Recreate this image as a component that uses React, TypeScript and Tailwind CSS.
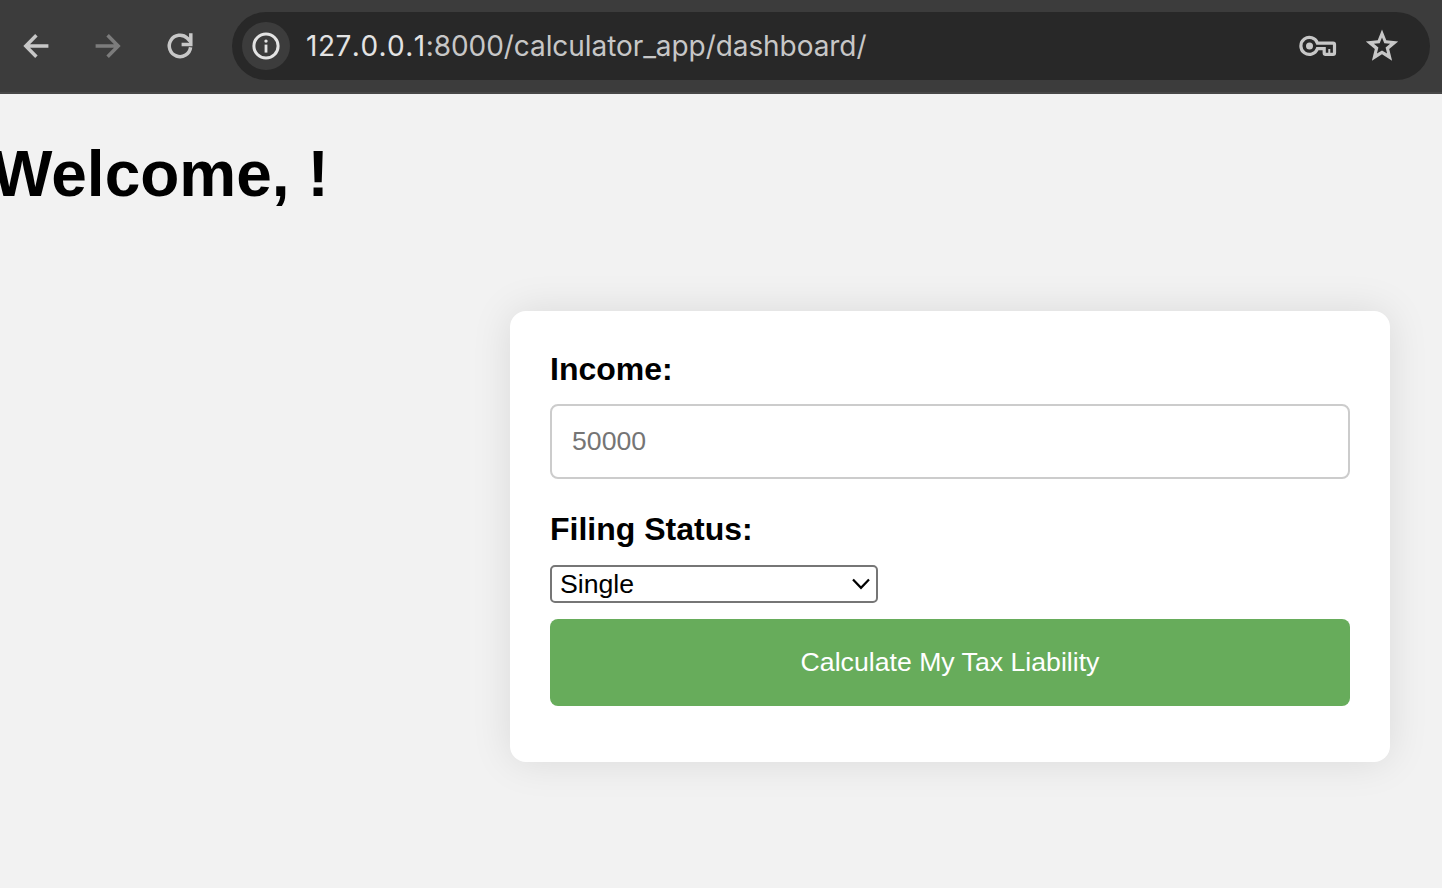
function BackIcon() {
  return (
    <svg width="26" height="26" viewBox="0 0 26 26" fill="none" stroke="currentColor" strokeWidth="3.5">
      <path d="M25.4 13H4M13.4 2.2L2.8 13l10.6 10.8" />
    </svg>
  );
}

function ForwardIcon() {
  return (
    <svg width="26" height="26" viewBox="0 0 26 26" fill="none" stroke="currentColor" strokeWidth="3.5">
      <path d="M.6 13H22M12.6 2.2L23.2 13 12.6 23.8" />
    </svg>
  );
}

function ReloadIcon() {
  return (
    <svg width="28" height="28" viewBox="0 0 28 28" fill="none" stroke="currentColor" strokeWidth="3.5">
      <path d="M24.6 15.2A10.7 10.7 0 1 1 21.4 6.2L24 9" />
      <path d="M15.6 12.6H24.8V1.2" />
    </svg>
  );
}

function InfoIcon() {
  return (
    <svg width="28" height="28" viewBox="0 0 28 28" fill="none">
      <circle cx="14" cy="14" r="12.1" stroke="#e3e3e3" strokeWidth="3" />
      <path d="M12.6 12.6h2.8v8h-2.8z" fill="#e3e3e3" />
      <circle cx="14" cy="9.1" r="1.7" fill="#e3e3e3" />
    </svg>
  );
}

function KeyIcon() {
  return (
    <svg width="38" height="22" viewBox="0 0 38 22" fill="none" stroke="#c7c7c7" strokeWidth="3.2">
      <path d="M18.4 8.1H34.1Q35.5 8.1 35.5 9.5V18Q35.5 19.4 34.1 19.4H26.6Q25.2 19.4 25.2 18V13.7H18.4A8.5 8.5 0 1 1 18.4 8.1Z" />
      <path d="M30.3 14V19" strokeWidth="2" />
      <circle cx="10.5" cy="11" r="3.5" fill="#c7c7c7" stroke="none" />
    </svg>
  );
}

function StarIcon() {
  return (
    <svg width="34" height="34" viewBox="0 0 34 34">
      <path
        fill="#c7c7c7"
        fillRule="evenodd"
        d="M17 .6L21.3 11.3L33.2 12.4L24.2 20L27.1 31.7L17 25.3L6.9 31.7L9.8 20L.8 12.4L12.7 11.3ZM17 8.6L14.7 14.2L8.9 14.7L13.4 18.6L11.9 24.5L17 21.4L22.1 24.5L20.6 18.6L25.1 14.7L19.3 14.2Z"
      />
    </svg>
  );
}

function BrowserBar() {
  return (
    <header className="flex h-[94px] items-start border-b-2 border-[#474747] bg-[#3c3c3c] pt-3 pr-3">
      <nav className="flex h-[68px] w-[232px] shrink-0 items-center pl-[23px]">
        <button className="text-[#c7c7c7]" aria-label="Back"><BackIcon /></button>
        <button className="ml-[46px] text-[#7c7c7c]" aria-label="Forward"><ForwardIcon /></button>
        <button className="ml-[45px] text-[#c7c7c7]" aria-label="Reload"><ReloadIcon /></button>
      </nav>
      <div className="flex h-[68px] flex-1 items-center rounded-full bg-[#282828] pl-2.5">
        <span className="flex size-12 items-center justify-center rounded-full bg-[#3c3c3c]"><InfoIcon /></span>
        <span className="ml-4 flex-1 whitespace-nowrap font-['Inter',sans-serif] text-[28px] leading-8 tracking-[-0.07px] text-[#c7c7c7]">
          <span className="tracking-[0.5px] text-[#e3e3e3] [font-kerning:none]">127.0.0.1</span>:8000/calculator_app/dashboard/
        </span>
        <KeyIcon />
        <span className="mr-[31px] ml-7"><StarIcon /></span>
      </div>
    </header>
  );
}

export default function App() {
  return (
    <div className="h-[888px] w-[1442px] overflow-hidden bg-[#f2f2f2] font-['Liberation_Sans',Arial,sans-serif] text-black">
      <BrowserBar />
      <h1 className="mt-[43px] -ml-2 text-[64px] leading-[74px] font-bold whitespace-nowrap">Welcome, !</h1>
      <form className="mt-[100px] ml-[510px] h-[451px] w-[880px] rounded-2xl bg-white px-10 pt-10 shadow-[0_0_40px_rgba(0,0,0,0.1)]">
        <label className="block text-[32px] leading-[37px] font-bold">Income:</label>
        <input
          className="mt-4 block h-[75px] w-full rounded-lg border-2 border-[#ccc] px-5 text-[26.67px] placeholder:text-[#757575]"
          placeholder="50000"
        />
        <label className="mt-8 block text-[32px] leading-[37px] font-bold">Filing Status:</label>
        <button type="button" className="mt-[17px] flex h-[38px] w-[328px] items-center justify-between rounded-[5px] border-2 border-[#767676] bg-white pr-1.5 pl-2 text-[26.67px] leading-[34px]">
          Single
          <svg width="18" height="12" viewBox="0 0 18 12" fill="none" stroke="black" strokeWidth="2.2">
            <path d="M1 1.5L9 9.8L17 1.5" />
          </svg>
        </button>
        <button type="button" className="mt-4 block h-[87px] w-full rounded-lg bg-[#67ac5b] pb-0.5 text-[26.67px] text-white">
          Calculate My Tax Liability
        </button>
      </form>
    </div>
  );
}
